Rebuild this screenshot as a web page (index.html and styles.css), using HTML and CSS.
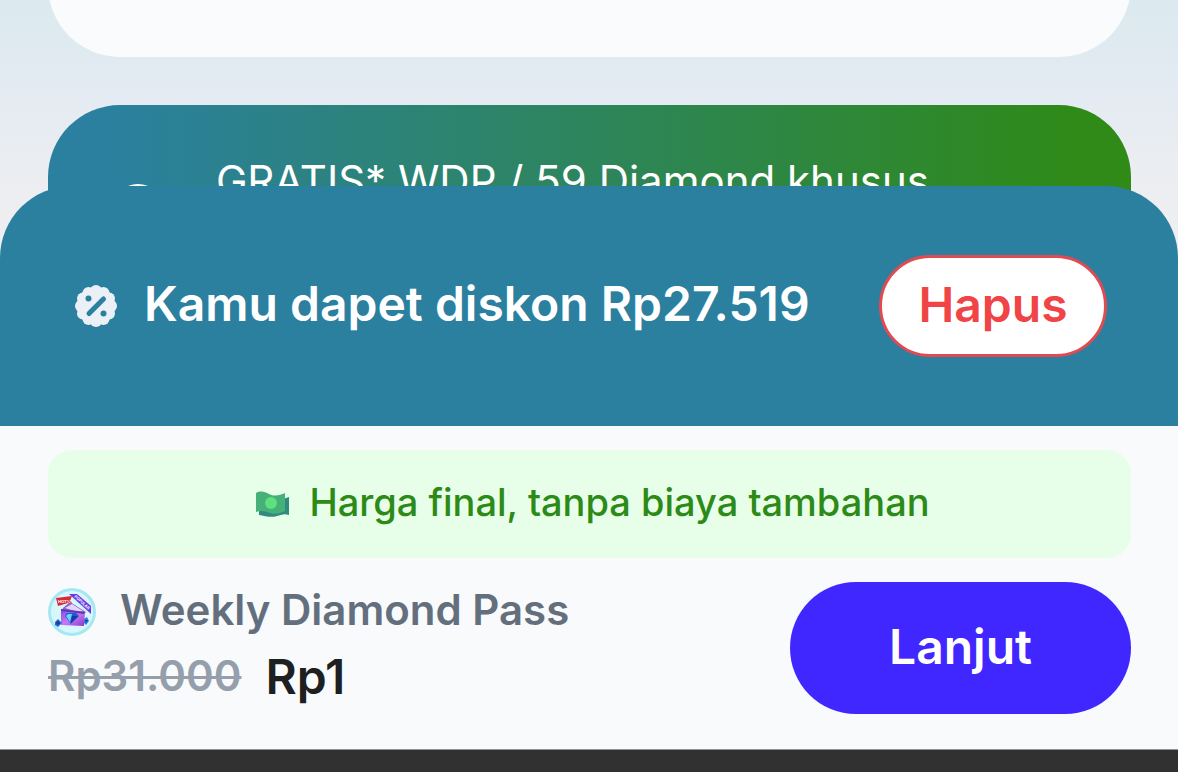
FILE: index.html
```html
<!DOCTYPE html>
<html lang="id">
<head>
    <meta charset="UTF-8">
    <meta name="viewport" content="width=device-width, initial-scale=1.0">
    <title>Weekly Diamond Pass</title>
    <link rel="stylesheet" href="styles.css">
</head>
<body>

    <main class="content">
        <section class="card"></section>

        <section class="promo">
            <svg class="promo-icon" viewBox="0 0 48 48" aria-hidden="true">
                <circle cx="24" cy="24" r="22" fill="none" stroke="#fff" stroke-width="4"/>
            </svg>
            <p class="promo-text">GRATIS* WDP / 59 Diamond khusus</p>
        </section>
    </main>

    <div class="sheet">
        <div class="discount">
            <svg class="discount-icon" viewBox="0 0 48 48" aria-hidden="true">
                <g fill="#eaf0f6">
                    <circle cx="24" cy="24" r="19"/>
                    <circle cx="24" cy="9" r="6"/>
                    <circle cx="31.500" cy="11" r="6"/>
                    <circle cx="37" cy="16.500" r="6"/>
                    <circle cx="39" cy="24" r="6"/>
                    <circle cx="37" cy="31.500" r="6"/>
                    <circle cx="31.500" cy="37" r="6"/>
                    <circle cx="24" cy="39" r="6"/>
                    <circle cx="16.500" cy="37" r="6"/>
                    <circle cx="11" cy="31.500" r="6"/>
                    <circle cx="9" cy="24" r="6"/>
                    <circle cx="11" cy="16.500" r="6"/>
                    <circle cx="16.500" cy="11" r="6"/>
                </g>
                <path d="M17 31.500L31.500 17" stroke="#2b80a0" stroke-width="5" stroke-linecap="round"/>
                <circle cx="16.500" cy="16.500" r="3" fill="#2b80a0"/>
                <circle cx="31.500" cy="31.500" r="3" fill="#2b80a0"/>
            </svg>
            <p class="discount-text">Kamu dapet diskon Rp27.519</p>
            <button type="button" class="remove">Hapus</button>
        </div>

        <div class="checkout">
            <p class="note">
                <svg class="note-icon" viewBox="0 0 36 36" aria-hidden="true">
                    <path d="M4 12C12 16 20 16 34 11V29C29 27 26 29 22 30C16 32 10 30 4 29Z" fill="#2f8a80"/>
                    <path d="M1 7C6 4 10 6 14 8C20 11 25 9 30 7V25C25 27 21 29 15 27C10 25 6 24 1 26Z" fill="#45b078"/>
                    <circle cx="16" cy="17" r="6" fill="#5ee07e"/>
                </svg>
                <span class="note-text">Harga final, tanpa biaya tambahan</span>
            </p>

            <div class="order">
                <div class="summary">
                    <div class="product">
                        <svg class="product-icon" viewBox="0 0 48 48" aria-hidden="true">
                            <defs>
                                <linearGradient id="box" x1="0" y1="0" x2="1" y2="1">
                                    <stop offset="0" stop-color="#7b4be0"/>
                                    <stop offset="0.5" stop-color="#c77af2"/>
                                    <stop offset="1" stop-color="#8b30cf"/>
                                </linearGradient>
                            </defs>
                            <circle cx="24" cy="24" r="22.500" fill="#d8f7fc" stroke="#a5e8f2" stroke-width="3"/>
                            <path d="M15 20L22 14L38 24L35 27L14 23Z" fill="#8c62c9"/>
                            <path d="M17 20L24 16L35 23L30 24Z" fill="#e3d5fa"/>
                            <path d="M13 21L37 24L36 38L13 37Z" fill="url(#box)"/>
                            <path d="M13 21L37 24L36 26L13 23Z" fill="#5b3bb0"/>
                            <path d="M19 25H28L31 28L23 36L17 28Z" fill="#2456d6"/>
                            <path d="M20 26H24L22 34L18 28Z" fill="#62d8fa"/>
                            <path d="M24 28H30L23 35Z" fill="#173b9d"/>
                            <path d="M7 34L10 31L14 35L10 39L7 37Z" fill="#2968dc"/>
                            <path d="M8 34L11 33L12 36L9 37Z" fill="#1b3b92"/>
                            <path d="M36 31L39 29L41 33L38 37L36 35Z" fill="#317ce4"/>
                            <path d="M37 32L40 32L38 35Z" fill="#1b3b92"/>
                            <path d="M8 10L24 8L22 13L24 15L20 15L10 18Z" fill="#d92836"/>
                            <text x="10" y="15" class="tag">HOT%</text>
                            <path d="M21 6H29L43 18V26Z" fill="#6838e8"/>
                            <text x="26" y="9" class="ribbon" transform="rotate(42 26 9)">POPULAR</text>
                        </svg>
                        <span class="product-name">Weekly Diamond Pass</span>
                    </div>
                    <div class="prices">
                        <del class="old-price">Rp31.000</del>
                        <span class="price">Rp1</span>
                    </div>
                </div>
                <button type="button" class="next">Lanjut</button>
            </div>
        </div>

        <div class="browser-bar"></div>
    </div>

</body>
</html>
```
FILE: styles.css
```css
* {
    box-sizing: border-box;
}

body {
    margin: 0;
    min-height: 100vh;
    overflow: hidden;
    font-family: Inter, "Liberation Sans", sans-serif;
    background: linear-gradient(to bottom, #dbeaee 0, #e2eaf2 72px, #edeef1 192px, #f0eff1 260px);
}

p {
    margin: 0;
}

button {
    padding: 0 0 4px;
    font-family: inherit;
    font-weight: 600;
    font-size: 48px;
    cursor: pointer;
}

.content {
    padding: 0 47px 0 48px;
}

/* scrolled partly out of view */
.card {
    height: 160px;
    margin-top: -103px;
    border-radius: 72px;
    background-color: #f9fbfc;
}

.promo {
    display: flex;
    align-items: flex-start;
    gap: 54px;
    height: 216px;
    margin-top: 48px;
    padding: 48px 66px;
    border-radius: 72px;
    background: linear-gradient(to right, #2b80a0 5%, #2f8a18 95%);
    color: #fff;
}

.promo-icon {
    flex: none;
    width: 48px;
    height: 48px;
    margin-top: 31px;
}

.promo-text {
    font-size: 42px;
    line-height: 56px;
}

.sheet {
    position: fixed;
    left: 0;
    right: 0;
    bottom: 0;
}

.discount {
    display: flex;
    align-items: center;
    gap: 24px;
    height: 240px;
    padding: 0 71px 0 72px;
    border-radius: 72px 72px 0 0;
    background-color: #2b80a0;
    color: #fff;
}

.discount-icon {
    flex: none;
    width: 48px;
    height: 48px;
}

.discount-text {
    flex: 1;
    padding-bottom: 4px;
    font-size: 48px;
    font-weight: 600;
    line-height: 60px;
    white-space: nowrap;
}

.remove {
    flex: none;
    width: 228px;
    height: 102px;
    border: 3px solid #e14a50;
    border-radius: 51px;
    background-color: #fff;
    color: #f04446;
}

.checkout {
    padding: 24px 47px 35px 48px;
    background-color: #f9fafc;
}

.note {
    display: flex;
    align-items: center;
    justify-content: center;
    gap: 18px;
    height: 108px;
    padding-left: 6px;
    border-radius: 24px;
    background-color: #e7fee8;
    color: #2c8a16;
    font-size: 38px;
    font-weight: 500;
}

.note-icon {
    flex: none;
    width: 36px;
    height: 36px;
}

.note-text {
    padding-bottom: 4px;
}

.order {
    display: flex;
    align-items: center;
    justify-content: space-between;
    margin-top: 24px;
}

.product {
    display: flex;
    align-items: center;
    gap: 24px;
    height: 60px;
}

.product-icon {
    flex: none;
    width: 48px;
    height: 48px;
}

.tag,
.ribbon {
    fill: #fff;
    font-size: 4px;
    font-weight: 700;
}

.product-name {
    padding-bottom: 6px;
    color: #636f7c;
    font-size: 42px;
    font-weight: 600;
    white-space: nowrap;
}

.prices {
    display: flex;
    align-items: center;
    gap: 24px;
    height: 72px;
    padding-bottom: 4px;
    font-weight: 600;
}

.old-price {
    padding-bottom: 2px;
    color: #959fab;
    font-size: 42px;
    text-decoration-thickness: 3px;
}

.price {
    color: #1d1f21;
    font-size: 48px;
}

.next {
    flex: none;
    width: 341px;
    height: 132px;
    border: none;
    border-radius: 66px;
    background-color: #4026ff;
    color: #fff;
}

.browser-bar {
    height: 23px;
    border-top: 1px solid #929394;
    background-color: #303130;
}
```
